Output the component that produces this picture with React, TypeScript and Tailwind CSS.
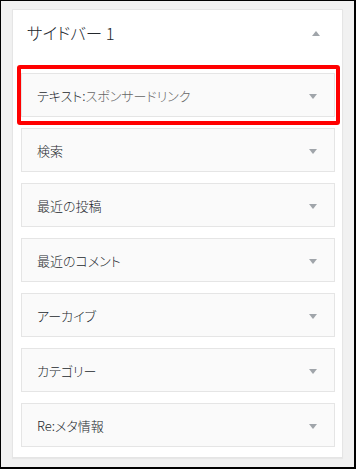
import { Fragment } from "react";

const widgets = [
  { title: "テキスト", sub: "スポンサードリンク", highlight: true },
  { title: "検索" },
  { title: "最近の投稿" },
  { title: "最近のコメント" },
  { title: "アーカイブ" },
  { title: "カテゴリー" },
  { title: "Re:メタ情報" },
];

function Arrow({ up = false }: { up?: boolean }) {
  return (
    <svg width="8" height="5" viewBox="0 0 8 5" className="shrink-0">
      <path d={up ? "M0 5 L4 0 L8 5 Z" : "M0 0 L8 0 L4 5 Z"} fill="#a0a5aa" />
    </svg>
  );
}

export default function App() {
  return (
    <div
      className="w-[356px] h-[469px] bg-[#f1f1f1] border-t border-l border-r-2 border-b-2 border-black pt-[8px] pl-[11px] font-light [font-feature-settings:'palt']"
      style={{ fontFamily: '"Noto Sans CJK JP", "Noto Sans", sans-serif' }}
    >
      <div className="w-[331px] bg-white border border-[#e5e5e5] shadow-[0_1px_1px_rgba(0,0,0,0.04)]">
        {/* Sidebar header */}
        <div className="h-[46px] flex items-center justify-between pl-[14px] pr-[22px]">
          <h2 className="text-[16.5px] text-[#23282d] leading-none">サイドバー 1</h2>
          <Arrow up />
        </div>

        {/* Widgets */}
        <div className="pt-[17px] pb-[10px] pl-[8px] pr-[7px] flex flex-col gap-[11px]">
          {widgets.map((w) => (
            <div
              key={w.title}
              className="relative h-[44px] bg-[#fafafa] border border-[#e5e5e5] flex items-center justify-between pl-[15px] pr-[17px]"
            >
              <span className="text-[13px] text-[#23282d] leading-none">
                {w.sub ? (
                  <Fragment>
                    {w.title}:<span className="text-[#666]">{w.sub}</span>
                  </Fragment>
                ) : (
                  w.title
                )}
              </span>
              <span className="mt-[3px]">
                <Arrow />
              </span>
              {w.highlight && (
                <div className="absolute -left-[5px] -right-[6px] -top-[9px] -bottom-[9px] border-4 border-[#f00] rounded-[3px] pointer-events-none" />
              )}
            </div>
          ))}
        </div>
      </div>
    </div>
  );
}
